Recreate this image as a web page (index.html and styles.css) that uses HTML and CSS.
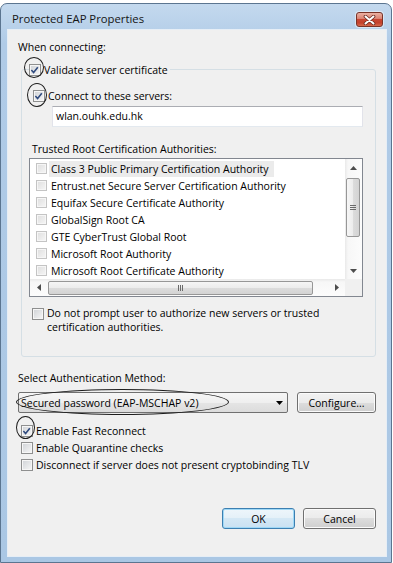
FILE: index.html
```html
<!DOCTYPE html>
<html lang="en">
<head>
    <meta charset="UTF-8">
    <meta name="viewport" content="width=device-width, initial-scale=1.0">
    <title>Protected EAP Properties</title>
    <link rel="stylesheet" href="styles.css">
</head>
<body>
    <div class="dialog">
        <!-- Title bar -->
        <div class="title-bar">
            <span class="title">Protected EAP Properties</span>
            <button class="close-btn" aria-label="Close">
                <svg width="13" height="10" viewBox="0 0 13 10">
                    <path class="x-shadow" d="M2.5 1.5 L10.5 8.5 M10.5 1.5 L2.5 8.5"/>
                    <path class="x-mark" d="M2.5 1.5 L10.5 8.5 M10.5 1.5 L2.5 8.5"/>
                </svg>
            </button>
        </div>

        <div class="client">
            <p class="caption first">When connecting:</p>

            <fieldset class="group">
                <legend class="check-row legend">
                    <span class="checkbox checked">
                        <svg width="12" height="12" viewBox="0 0 12 12"><path d="M2.6 6 L5 8.7 L9.6 2.9"/></svg>
                    </span>
                    <span>Validate server certificate</span>
                    <span class="ring ring-validate"></span>
                </legend>

                <div class="check-row connect">
                    <span class="checkbox checked">
                        <svg width="12" height="12" viewBox="0 0 12 12"><path d="M2.6 6 L5 8.7 L9.6 2.9"/></svg>
                    </span>
                    <span>Connect to these servers:</span>
                    <span class="ring ring-connect"></span>
                </div>
                <div class="text-field">wlan.ouhk.edu.hk</div>

                <p class="caption trusted">Trusted Root Certification Authorities:</p>
                <div class="cert-list">
                    <ul class="cert-items">
                        <li><span class="checkbox light"></span><span class="cert-name selected">Class 3 Public Primary Certification Authority</span></li>
                        <li><span class="checkbox light"></span><span class="cert-name">Entrust.net Secure Server Certification Authority</span></li>
                        <li><span class="checkbox light"></span><span class="cert-name">Equifax Secure Certificate Authority</span></li>
                        <li><span class="checkbox light"></span><span class="cert-name">GlobalSign Root CA</span></li>
                        <li><span class="checkbox light"></span><span class="cert-name">GTE CyberTrust Global Root</span></li>
                        <li><span class="checkbox light"></span><span class="cert-name">Microsoft Root Authority</span></li>
                        <li><span class="checkbox light"></span><span class="cert-name">Microsoft Root Certificate Authority</span></li>
                    </ul>
                    <div class="v-scroll">
                        <span class="scroll-btn"><svg width="7" height="4" viewBox="0 0 7 4"><polygon points="3.5,0 7,4 0,4"/></svg></span>
                        <span class="thumb v-thumb">
                            <svg width="6" height="7" viewBox="0 0 6 7"><path d="M0 1.5 H6 M0 3.5 H6 M0 5.5 H6"/></svg>
                        </span>
                        <span class="scroll-btn"><svg width="7" height="4" viewBox="0 0 7 4"><polygon points="0,0 7,0 3.5,4"/></svg></span>
                    </div>
                    <div class="h-scroll">
                        <span class="scroll-btn"><svg width="4" height="7" viewBox="0 0 4 7"><polygon points="0,3.5 4,0 4,7"/></svg></span>
                        <span class="thumb h-thumb">
                            <svg width="7" height="6" viewBox="0 0 7 6"><path d="M1.5 0 V6 M3.5 0 V6 M5.5 0 V6"/></svg>
                        </span>
                        <span class="scroll-btn"><svg width="4" height="7" viewBox="0 0 4 7"><polygon points="0,0 4,3.5 0,7"/></svg></span>
                    </div>
                    <div class="scroll-corner"></div>
                </div>

                <div class="check-row prompt">
                    <span class="checkbox"></span>
                    <span class="prompt-text">Do not prompt user to authorize new servers or trusted certification authorities.</span>
                </div>
            </fieldset>

            <p class="caption method">Select Authentication Method:</p>
            <div class="method-row">
                <div class="combo">
                    <span>Secured password (EAP-MSCHAP v2)</span>
                    <svg width="7" height="4" viewBox="0 0 7 4"><polygon points="0,0 7,0 3.5,4"/></svg>
                    <span class="ring ring-combo"></span>
                </div>
                <button class="btn configure">Configure...</button>
            </div>

            <div class="options">
                <div class="check-row option">
                    <span class="checkbox checked">
                        <svg width="12" height="12" viewBox="0 0 12 12"><path d="M2.6 6 L5 8.7 L9.6 2.9"/></svg>
                    </span>
                    <span>Enable Fast Reconnect</span>
                    <span class="ring ring-fast"></span>
                </div>
                <div class="check-row option">
                    <span class="checkbox"></span>
                    <span>Enable Quarantine checks</span>
                </div>
                <div class="check-row option">
                    <span class="checkbox"></span>
                    <span>Disconnect if server does not present cryptobinding TLV</span>
                </div>
            </div>

            <div class="actions">
                <button class="btn default">OK</button>
                <button class="btn">Cancel</button>
            </div>
        </div>
    </div>
</body>
</html>
```

FILE: styles.css
```css
* {
    box-sizing: border-box;
}

body {
    margin: 0;
    background: #fff;
    font-family: "Open Sans", "Noto Sans", sans-serif;
    font-size: 10.5px;
    line-height: 14px;
    color: #000;
}

/* Window frame */
.dialog {
    display: flex;
    flex-direction: column;
    width: 392px;
    height: 560px;
    margin-top: 3px;
    padding: 0 4px 5px 6px;
    border: 1px solid #5b7590;
    border-radius: 7px 7px 0 0;
    background: linear-gradient(#c4d9ee, #b0cbe7 40px, #aac7e4);
}

.title-bar {
    display: flex;
    justify-content: space-between;
    align-items: flex-start;
    height: 25px;
    flex-shrink: 0;
}

.title {
    margin: 8px 0 0 5px;
    font-size: 11.3px;
    line-height: 14px;
    color: #151515;
}

.close-btn {
    display: flex;
    align-items: center;
    justify-content: center;
    width: 27px;
    height: 15px;
    margin: 8px 4px 0 0;
    padding: 0;
    border: 1px solid #7a3328;
    border-radius: 3px;
    background: linear-gradient(#eab0a2 0%, #dc8575 42%, #c84632 50%, #c4412c 75%, #d86a4c 100%);
    box-shadow: 0 0 0 1px rgba(255, 255, 255, 0.45);
}

.close-btn svg path {
    fill: none;
    stroke-linecap: round;
}

.x-shadow {
    stroke: #6b2a20;
    stroke-width: 3.6;
}

.x-mark {
    stroke: #fff;
    stroke-width: 2;
}

/* Client area */
.client {
    flex: 1;
    padding: 0 10px;
    border: 1px solid #e6eef6;
    background: #f0f0f0;
}

.caption {
    margin: 0;
}

.caption.first {
    margin-top: 10px;
}

.check-row {
    position: relative;
    display: flex;
    align-items: center;
    gap: 3px;
    height: 14px;
}

.checkbox {
    display: inline-flex;
    flex-shrink: 0;
    width: 12px;
    height: 12px;
    border: 1px solid #8e8f8f;
    background: linear-gradient(135deg, #cfd2d6, #f7f7f7);
    box-shadow: inset 0 0 0 1px #f6f6f6;
}

.checkbox svg {
    margin: -1px 0 0 -1px;
}

.checkbox svg path {
    fill: none;
    stroke: #2f4a7e;
    stroke-width: 1.7;
}

.checkbox.light {
    width: 11px;
    height: 11px;
    border-color: #c4c4c4;
    background: linear-gradient(135deg, #dedede, #f6f6f6);
}

/* hand-drawn marks over the screenshot */
.ring {
    position: absolute;
    border: 1.5px solid #1d1d1d;
    border-radius: 50%;
    pointer-events: none;
}

.ring-validate {
    left: -5px;
    top: -5px;
    width: 20px;
    height: 21px;
}

.ring-connect {
    left: -6px;
    top: -6px;
    width: 20px;
    height: 24px;
}

.ring-fast {
    left: -5px;
    top: -6px;
    width: 19px;
    height: 23px;
}

.ring-combo {
    left: -3px;
    top: -4px;
    width: 213px;
    height: 26px;
}

/* Group box */
.group {
    min-width: 0;
    margin: 8px 0 0 3px;
    padding: 0 12px 22px 7px;
    border: 1px solid #d5dfe5;
    border-radius: 3px;
}

.legend {
    height: 15px;
    padding: 0 2px 0 0;
    margin-left: 0;
}

.connect {
    margin: 12px 0 0 4px;
}

.text-field {
    height: 21px;
    margin: 3px 0 0 23px;
    padding: 0 3px;
    border: 1px solid #e2e3ea;
    border-top-color: #abadb3;
    border-bottom-color: #e3e9ef;
    background: #fff;
    line-height: 19px;
}

.caption.trusted {
    margin: 15px 0 0 3px;
}

/* Certificate list */
.cert-list {
    display: grid;
    grid-template-columns: 1fr 17px;
    grid-template-rows: 120px 17px;
    height: 139px;
    margin-top: 2px;
    border: 1px solid #828790;
    background: #fff;
}

.cert-items {
    margin: 0;
    padding: 1px 0 0;
    list-style: none;
    overflow: hidden;
}

.cert-items li {
    display: flex;
    align-items: center;
    gap: 4px;
    height: 17px;
    padding-left: 6px;
    white-space: nowrap;
}

.cert-name {
    line-height: 16px;
}

.cert-name.selected {
    margin-left: -2px;
    padding: 0 5px 0 2px;
    background: #ebebeb;
}

.v-scroll {
    display: flex;
    flex-direction: column;
    justify-content: space-between;
    background: linear-gradient(to right, #e9e9e9, #f7f7f7 3px, #fcfcfc);
}

.h-scroll {
    display: flex;
    align-items: center;
    justify-content: space-between;
    background: linear-gradient(#e9e9e9, #f7f7f7 3px, #fcfcfc);
}

.scroll-btn {
    display: flex;
    align-items: center;
    justify-content: center;
    width: 17px;
    height: 17px;
    flex-shrink: 0;
}

.scroll-btn polygon {
    fill: #4d4d4d;
}

.thumb {
    display: flex;
    align-items: center;
    justify-content: center;
    border: 1px solid #979797;
    border-radius: 2px;
}

.thumb path {
    stroke: #6a6a6a;
    stroke-width: 1;
}

.v-thumb {
    width: 14px;
    height: 59px;
    margin: 2px 2px 0 1px;
    flex-grow: 0;
    background: linear-gradient(to right, #f6f6f6, #ececec 50%, #dcdcdc 50%, #d3d3d3);
    margin-bottom: auto;
}

.v-scroll .scroll-btn:last-child {
    margin-top: auto;
}

.h-thumb {
    width: 265px;
    height: 14px;
    margin-left: 1px;
    margin-right: auto;
    background: linear-gradient(#f6f6f6, #ececec 50%, #dcdcdc 50%, #d3d3d3);
}

.scroll-corner {
    background: #f0f0f0;
}

.prompt {
    align-items: flex-start;
    height: auto;
    margin: 9px 0 0 3px;
}

.prompt .checkbox {
    margin-top: 2px;
}

.prompt-text {
    width: 300px;
}

/* Authentication method */
.caption.method {
    margin-top: 14px;
}

.method-row {
    display: flex;
    justify-content: space-between;
    margin-top: 7px;
}

.combo {
    position: relative;
    display: flex;
    align-items: center;
    justify-content: space-between;
    width: 270px;
    height: 21px;
    padding: 0 4px 0 2px;
    border: 1px solid #707070;
    border-radius: 2px;
    background: linear-gradient(#f6f6f6, #efefef 50%, #e5e5e5 50%, #dcdcdc);
}

.combo polygon {
    fill: #000;
}

.btn {
    height: 21px;
    padding: 0;
    border: 1px solid #707070;
    border-radius: 3px;
    background: linear-gradient(#f2f2f2, #ebebeb 50%, #dddddd 50%, #cfcfcf);
    box-shadow: inset 0 0 0 1px #fbfbfb;
    font: inherit;
    color: #000;
}

.configure {
    width: 79px;
}

.options {
    margin-top: 9px;
}

.option {
    height: 17px;
    margin-left: 3px;
}

.actions {
    display: flex;
    justify-content: flex-end;
    gap: 8px;
    margin-top: 35px;
}

.actions .btn {
    width: 73px;
}

.btn.default {
    border-color: #3c7fb1;
    background: linear-gradient(#eef6fb, #e4f0f8 50%, #d4e8f5 50%, #c9e1f2);
    box-shadow: inset 0 0 0 1px #9fd8f6;
}
```
